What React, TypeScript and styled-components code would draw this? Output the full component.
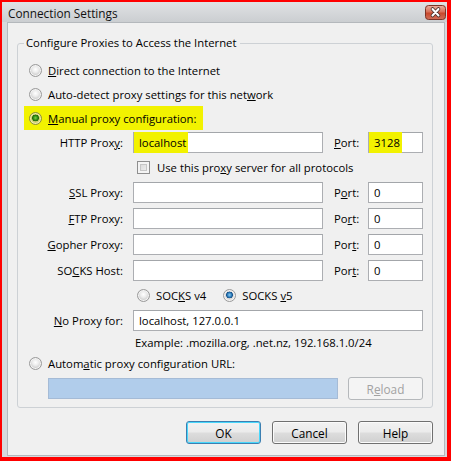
import React from 'react';
import styled, { createGlobalStyle } from 'styled-components';

const GlobalStyle = createGlobalStyle`
  html, body {
    margin: 0;
    padding: 0;
    background: #ff0000;
  }
  body {
    font-family: 'Open Sans', 'Noto Sans', sans-serif;
    font-size: 11.3px;
    color: #000;
  }
`;

const Window = styled.div`
  box-sizing: border-box;
  margin: 2px 0 0 2px;
  width: 445px;
  height: 455px;
  background: #d6d9dc;
  display: flex;
  flex-direction: column;
`;

const TitleBar = styled.div`
  height: 20px;
  flex: none;
  display: flex;
  justify-content: space-between;
  background: linear-gradient(#e0e2e4, #cbced1);
`;

const Title = styled.span`
  padding-left: 6px;
  line-height: 22px;
  font-size: 11.8px;
  color: #111;
`;

const CloseBtn = styled.svg`
  margin: 3px 1px 0 0;
`;

const Frame = styled.div`
  flex: 1;
  display: flex;
  padding: 0 2px 1px 5px;
`;

const Content = styled.div`
  flex: 1;
  display: flex;
  flex-direction: column;
  border: 1px solid #b4b8bc;
  background: #f0f0f0;
`;

const Group = styled.div`
  position: relative;
  margin: 20px 11px 0 9px;
  padding: 14px 8px 7px 11px;
  border: 1px solid #cdd1d5;
  border-radius: 3px;
`;

const Legend = styled.span`
  position: absolute;
  top: -9px;
  left: 6px;
  padding: 0 4px 0 2px;
  line-height: 16px;
  background: #f0f0f0;
  white-space: nowrap;
`;

const OptionRow = styled.div<{ $hl?: boolean }>`
  display: flex;
  align-items: center;
  gap: 6px;
  height: 24px;
  white-space: nowrap;
  ${(p) =>
    p.$hl &&
    `
    align-self: flex-start;
    width: fit-content;
    margin-left: -5px;
    padding: 0 6px 0 5px;
    background: #f2f200;
  `}
`;

const Radio = styled.span<{ $checked?: boolean; $hl?: boolean }>`
  box-sizing: border-box;
  flex: none;
  width: 13px;
  height: 13px;
  border-radius: 50%;
  border: 1px solid ${(p) => (p.$hl ? '#8c8c3c' : '#9a9a9a')};
  background: ${(p) =>
    p.$checked
      ? p.$hl
        ? 'radial-gradient(circle at 50% 45%, #7fd04a 0, #2e8a12 2.2px, #1f6a0a 3.2px, #c8c86a 3.6px, #e7e7a0 100%)'
        : 'radial-gradient(circle at 50% 45%, #8ccdf5 0, #2a7ab8 2.2px, #184f86 3.2px, #d7d7d7 3.6px, #fafafa 100%)'
      : 'radial-gradient(circle at 50% 40%, #ffffff 0, #ececec 3px, #d5d5d5 5px, #c4c4c4 100%)'};
  box-shadow: inset 0 0 0 1px ${(p) => (p.$hl ? '#f0f0a8' : '#f4f4f4')};
`;

const Check = styled.span`
  box-sizing: border-box;
  flex: none;
  width: 13px;
  height: 13px;
  border: 1px solid #8f8f8f;
  background: linear-gradient(135deg, #d4d4d4, #f5f5f5);
  box-shadow: inset 0 0 0 2px #f4f4f4, inset 0 0 0 3px #c6c6c6;
`;

const ProxyGrid = styled.div`
  display: grid;
  margin: 2px 0 0 -11px;
  grid-template-columns: 115px 190px 45px 55px;
  grid-template-rows: 21px 19px 21px 21px 21px 21px 19px 21px 14px;
  row-gap: 5px;
  white-space: nowrap;
`;

const Label = styled.span`
  align-self: center;
  text-align: right;
  padding-right: 10px;
`;

const PortLabel = styled.span`
  align-self: center;
  padding-left: 11px;
`;

const TextBox = styled.div<{ $wide?: boolean }>`
  box-sizing: border-box;
  display: flex;
  align-items: center;
  height: 100%;
  padding: 0 5px;
  border: 1px solid #acaeb2;
  border-top-color: #a3a6aa;
  background: #fff;
  ${(p) => p.$wide && 'grid-column: 2 / 5;'}
`;

const Mark = styled.span<{ $pad: number }>`
  align-self: stretch;
  display: flex;
  align-items: center;
  margin: -1px 0 -1px ${(p) => -p.$pad}px;
  padding: 0 2px 0 ${(p) => p.$pad}px;
  background: #f2f200;
`;

const SubRow = styled.div<{ $gap: number }>`
  grid-column: 2 / 5;
  display: flex;
  align-items: center;
  gap: ${(p) => p.$gap}px;
  margin-left: 4px;
`;

const Pair = styled.span`
  display: flex;
  align-items: center;
  gap: 6px;
`;

const Hint = styled.span`
  grid-column: 2 / 5;
  padding-left: 2px;
  line-height: 14px;
`;

const UrlRow = styled.div`
  display: flex;
  align-items: center;
  gap: 10px;
  height: 23px;
  margin: 2px 0 0 19px;
`;

const UrlBox = styled.div`
  box-sizing: border-box;
  width: 290px;
  height: 21px;
  border: 1px solid #a5bbd6;
  background: #b1cdeb;
`;

const Button = styled.button<{ $default?: boolean; $disabled?: boolean }>`
  box-sizing: border-box;
  width: 75px;
  height: 23px;
  padding: 0;
  border-radius: 3px;
  font: inherit;
  font-size: 11.8px;
  color: ${(p) => (p.$disabled ? '#a2a2a2' : '#000')};
  border: 1px solid ${(p) => (p.$default ? '#3c7fb1' : p.$disabled ? '#b5b8bb' : '#707070')};
  background: ${(p) =>
    p.$disabled
      ? '#f4f4f4'
      : 'linear-gradient(#f2f2f2 0%, #ebebeb 48%, #dddddd 52%, #cfcfcf 100%)'};
  box-shadow: inset 0 0 0 1px
    ${(p) => (p.$default ? '#48d7fb' : p.$disabled ? '#f4f4f4' : '#fbfbfb')};
`;

const Buttons = styled.div`
  display: flex;
  justify-content: flex-end;
  gap: 11px;
  margin: 13px 11px 0 0;
`;

const RadioOption = ({
  checked,
  hl,
  children,
}: {
  checked?: boolean;
  hl?: boolean;
  children: React.ReactNode;
}) => (
  <OptionRow $hl={hl}>
    <Radio $checked={checked} $hl={hl} />
    <span>{children}</span>
  </OptionRow>
);

const ProxyRow = ({
  label,
  port,
  value,
  portValue,
}: {
  label: React.ReactNode;
  port: React.ReactNode;
  value?: React.ReactNode;
  portValue: React.ReactNode;
}) => (
  <>
    <Label>{label}</Label>
    <TextBox>{value}</TextBox>
    <PortLabel>{port}</PortLabel>
    <TextBox>{portValue}</TextBox>
  </>
);

export default function App() {
  return (
    <>
      <GlobalStyle />
      <Window>
        <TitleBar>
          <Title>Connection Settings</Title>
          <CloseBtn width="21" height="15" viewBox="0 0 21 15">
            <defs>
              <linearGradient id="cls" x1="0" y1="0" x2="0" y2="1">
                <stop offset="0" stopColor="#eab0a0" />
                <stop offset="0.45" stopColor="#d7715a" />
                <stop offset="0.55" stopColor="#c8482c" />
                <stop offset="1" stopColor="#d0705a" />
              </linearGradient>
            </defs>
            <rect x="0.5" y="0.5" width="20" height="14" rx="3" fill="url(#cls)" stroke="#7d3326" />
            <path d="M7.5 4 L13.5 10.5 M13.5 4 L7.5 10.5" stroke="#47302c" strokeWidth="3.6" strokeLinecap="round" />
            <path d="M7.5 4 L13.5 10.5 M13.5 4 L7.5 10.5" stroke="#ffffff" strokeWidth="2" strokeLinecap="round" />
          </CloseBtn>
        </TitleBar>
        <Frame>
          <Content>
            <Group>
              <Legend>Configure Proxies to Access the Internet</Legend>
              <RadioOption>
                <u>D</u>irect connection to the Internet
              </RadioOption>
              <RadioOption>
                Auto-detect proxy settings for this net<u>w</u>ork
              </RadioOption>
              <RadioOption checked hl>
                <u>M</u>anual proxy configuration:
              </RadioOption>
              <ProxyGrid>
                <Label>
                  HTTP Prox<u>y</u>:
                </Label>
                <TextBox>
                  <Mark $pad={5}>localhost</Mark>
                </TextBox>
                <PortLabel>
                  <u>P</u>ort:
                </PortLabel>
                <TextBox>
                  <Mark $pad={5}>3128</Mark>
                </TextBox>
                <SubRow $gap={7}>
                  <Check />
                  <span>
                    Use this pro<u>x</u>y server for all protocols
                  </span>
                </SubRow>
                <ProxyRow
                  label={
                    <>
                      <u>S</u>SL Proxy:
                    </>
                  }
                  port={
                    <>
                      P<u>o</u>rt:
                    </>
                  }
                  portValue="0"
                />
                <ProxyRow
                  label={
                    <>
                      <u>F</u>TP Proxy:
                    </>
                  }
                  port={
                    <>
                      Po<u>r</u>t:
                    </>
                  }
                  portValue="0"
                />
                <ProxyRow
                  label={
                    <>
                      <u>G</u>opher Proxy:
                    </>
                  }
                  port={
                    <>
                      Por<u>t</u>:
                    </>
                  }
                  portValue="0"
                />
                <ProxyRow
                  label={
                    <>
                      SO<u>C</u>KS Host:
                    </>
                  }
                  port={
                    <>
                      Por<u>t</u>:
                    </>
                  }
                  portValue="0"
                />
                <SubRow $gap={17}>
                  <Pair>
                    <Radio />
                    <span>
                      SOC<u>K</u>S v4
                    </span>
                  </Pair>
                  <Pair>
                    <Radio $checked />
                    <span>
                      SOCKS <u>v</u>5
                    </span>
                  </Pair>
                </SubRow>
                <Label>
                  <u>N</u>o Proxy for:
                </Label>
                <TextBox $wide>localhost, 127.0.0.1</TextBox>
                <Hint>Example: .mozilla.org, .net.nz, 192.168.1.0/24</Hint>
              </ProxyGrid>
              <div style={{ marginTop: 1 }}>
                <RadioOption>
                  Autom<u>a</u>tic proxy configuration URL:
                </RadioOption>
              </div>
              <UrlRow>
                <UrlBox />
                <Button $disabled>
                  R<u>e</u>load
                </Button>
              </UrlRow>
            </Group>
            <Buttons>
              <Button $default>OK</Button>
              <Button>Cancel</Button>
              <Button>Help</Button>
            </Buttons>
          </Content>
        </Frame>
      </Window>
    </>
  );
}
